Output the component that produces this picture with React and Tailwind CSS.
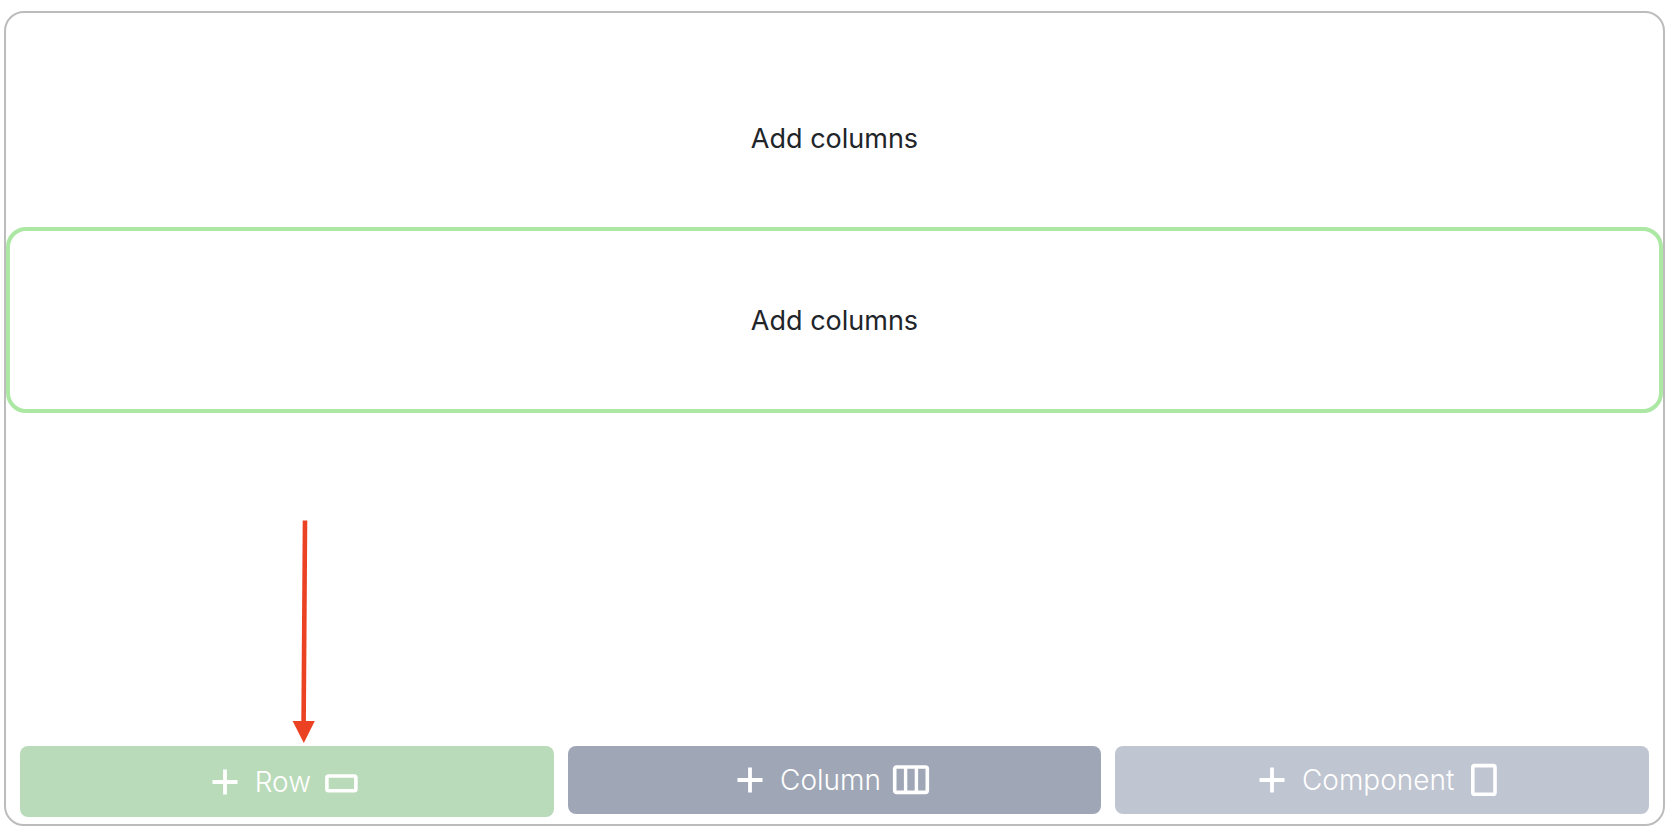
import clsx from "clsx";

const PlusIcon = () => (
  <svg className="h-[26px] w-[26px]" viewBox="0 0 26 26" aria-hidden="true">
    <path d="M13 0.5v25M0.5 13h25" stroke="currentColor" strokeWidth="3.8" />
  </svg>
);

const RowIcon = () => (
  <svg className="h-9 w-[42px]" viewBox="0 0 42 36" fill="none" aria-hidden="true">
    <rect x="6.9" y="12" width="29" height="14.8" rx="1.8" stroke="currentColor" strokeWidth="3.6" />
  </svg>
);

const ColumnIcon = () => (
  <svg className="h-9 w-[42px]" viewBox="0 0 42 36" fill="none" aria-hidden="true">
    <rect x="4.7" y="5" width="32.6" height="25.4" rx="1.8" stroke="currentColor" strokeWidth="3.6" />
    <path d="M15.6 5v25M26.4 5v25" stroke="currentColor" strokeWidth="3.4" />
  </svg>
);

const ComponentIcon = () => (
  <svg className="h-9 w-[42px]" viewBox="0 0 42 36" fill="none" aria-hidden="true">
    <rect x="9.8" y="3.6" width="22.2" height="28.6" rx="1.8" stroke="currentColor" strokeWidth="3.6" />
  </svg>
);

const Arrow = () => (
  <svg
    className="absolute bottom-full left-1/2 mb-[3px] ml-1 h-[224px] w-6"
    viewBox="0 0 24 224"
    aria-hidden="true"
  >
    <path d="M14 1.5L12.6 204" stroke="#ec4224" strokeWidth="4.6" />
    <path d="M1.6 202h22.2L12.8 224z" fill="#ec4224" />
  </svg>
);

const AddButton = ({ label, icon, className }) => (
  <button
    type="button"
    className={clsx(
      "flex w-full items-center justify-center rounded-lg text-[28px] leading-9 font-light text-white",
      className
    )}
  >
    <PlusIcon />
    <span className="mr-[9px] ml-[17px]">{label}</span>
    {icon}
  </button>
);

const App = () => {
  return (
    <main className="flex min-h-screen flex-col bg-white pt-[11px] pr-[15px] pb-3 pl-1 font-['Inter',sans-serif] text-[#212529]">
      <div className="flex flex-1 flex-col rounded-[20px] border-2 border-[#bcbcbc]">
        <div className="pt-[106px] pb-[68px] text-center text-[27px] leading-10">
          Add columns
        </div>
        <div className="rounded-[20px] border-4 border-[#ace7a4] pt-[70px] pb-[68px] text-center text-[27px] leading-10">
          Add columns
        </div>

        {/* Toolbar */}
        <div className="mt-auto grid grid-cols-3 items-start gap-[14px] px-[14px] pb-[7px]">
          <div className="relative">
            <Arrow />
            <AddButton
              label="Row"
              icon={<RowIcon />}
              className="bg-[#badbba] pt-[18px] pb-[17px]"
            />
          </div>
          <AddButton
            label="Column"
            icon={<ColumnIcon />}
            className="bg-[#9fa7b7] py-4"
          />
          <AddButton
            label="Component"
            icon={<ComponentIcon />}
            className="bg-[#bfc5d1] py-4"
          />
        </div>
      </div>
    </main>
  );
};

export default App;
